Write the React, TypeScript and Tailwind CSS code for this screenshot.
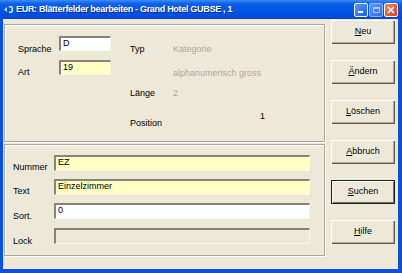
import React from "react";

const inputBase =
  "border-t-2 border-l-2 border-t-[#85837a] border-l-[#85837a] border-b border-r border-b-[#f7f6f1] border-r-[#f7f6f1] px-[2px] leading-[11px] text-black";

function Btn({ label, def }: { label: string; def?: boolean }) {
  const first = label.charAt(0);
  const rest = label.slice(1);
  return (
    <div
      className={
        "w-[64px] h-[24px] flex items-center justify-center bg-[#ece9d8] text-black " +
        (def
          ? "border border-[#1c1c1c] shadow-[inset_1px_1px_0_#ffffff,inset_-1px_-1px_0_#716f64]"
          : "shadow-[inset_1px_1px_0_#ffffff,inset_-1px_-1px_0_#5e5c53,inset_-2px_-2px_0_#aca899]")
      }
    >
      <span>
        <span className="underline underline-offset-[1px]">{first}</span>
        {rest}
      </span>
    </div>
  );
}

export default function App() {
  return (
    <div className="w-[402px] h-[273px] flex flex-col bg-[#0a4fdf] font-['Liberation_Sans',Arial,sans-serif] text-[9px] overflow-hidden">
      {/* title bar */}
      <div className="h-[19px] shrink-0 flex items-center pl-[3px] pr-[4px] bg-[linear-gradient(to_bottom,#3d8cf6_0%,#0b5fe9_20%,#0055e5_60%,#0047d6_100%)]">
        <svg width="11" height="9" viewBox="0 0 11 9" className="shrink-0">
          <path d="M1 4.5 L4 2 L4 7 Z" fill="#cfe3ff" />
          <path d="M6 2 C9 1 10 3 9 4.5 C10 6 9 8 6 7" stroke="#e8f2ff" strokeWidth="1.4" fill="none" />
        </svg>
        <span className="ml-[2px] text-white font-bold text-[9px] tracking-[-0.3px] leading-[11px] [text-shadow:1px_1px_0_#0a2a8a] whitespace-nowrap">
          EUR: Blätterfelder bearbeiten - Grand Hotel GUBSE , 1
        </span>
        <div className="ml-auto flex gap-[1px]">
          <div className="w-[14px] h-[14px] rounded-[2px] border border-white bg-[linear-gradient(135deg,#5b9cff,#1d5ee8)] flex items-end pl-[3px] pb-[3px]">
            <div className="w-[5px] h-[2px] bg-white" />
          </div>
          <div className="w-[14px] h-[14px] rounded-[2px] border border-[#b8cdf5] bg-[linear-gradient(135deg,#6fa6f8,#3d76e6)] flex items-center justify-center opacity-80">
            <div className="w-[7px] h-[6px] border border-[#d7e3fb] border-t-2" />
          </div>
          <div className="w-[14px] h-[14px] rounded-[2px] border border-white bg-[linear-gradient(135deg,#f08a5e,#d9401a)] flex items-center justify-center">
            <svg width="8" height="8" viewBox="0 0 8 8">
              <path d="M1 1 L7 7 M7 1 L1 7" stroke="white" strokeWidth="1.6" />
            </svg>
          </div>
        </div>
      </div>

      {/* body with frame */}
      <div className="flex-1 flex pl-[3px] pr-[4px] pb-[4px]">
        <div className="flex-1 flex bg-[#ece9d8]">
          {/* left column */}
          <div className="w-[322px] pl-[1px] pt-[5px] flex flex-col gap-[2px]">
            {/* top groupbox */}
            <div className="h-[118px] border border-[#aca899] shadow-[inset_1px_1px_0_#ffffff,1px_1px_0_#ffffff] flex">
              <div className="pl-[13px] pt-[11px] flex flex-col">
                <div className="flex">
                  <span className="w-[41px] pt-[8px] leading-[11px]">Sprache</span>
                  <div className={"w-[52px] h-[15px] bg-white " + inputBase}>D</div>
                </div>
                <div className="flex mt-[5px]">
                  <span className="w-[41px] pt-[7px] leading-[11px]">Art</span>
                  <div className={"w-[52px] h-[15px] bg-[#ffffc4] " + inputBase}>19</div>
                </div>
              </div>
              <div className="ml-[19px] pt-[19px] flex flex-col leading-[11px]">
                <div className="flex">
                  <span className="w-[43px]">Typ</span>
                  <span className="text-[#aca899]">Kategorie</span>
                </div>
                <div className="flex mt-[13px]">
                  <span className="w-[43px]" />
                  <span className="text-[#aca899]">alphanumerisch gross</span>
                </div>
                <div className="flex mt-[9px]">
                  <span className="w-[43px]">Länge</span>
                  <span className="text-[#aca899]">2</span>
                </div>
                <div className="flex mt-[12px] items-start">
                  <span className="w-[43px] mt-[7px]">Position</span>
                  <span className="ml-[87px]">1</span>
                </div>
              </div>
            </div>

            {/* bottom groupbox */}
            <div className="h-[112px] border border-[#aca899] shadow-[inset_1px_1px_0_#ffffff,1px_1px_0_#ffffff] pl-[8px] pt-[10px] flex flex-col gap-[6px]">
              <div className="flex">
                <span className="w-[41px] pt-[7px] leading-[11px]">Nummer</span>
                <div className={"w-[256px] h-[16px] bg-[#ffffc4] " + inputBase}>EZ</div>
              </div>
              <div className="flex">
                <span className="w-[41px] pt-[7px] leading-[11px]">Text</span>
                <div className={"w-[256px] h-[16px] bg-[#ffffc4] " + inputBase}>Einzelzimmer</div>
              </div>
              <div className="flex">
                <span className="w-[41px] pt-[8px] leading-[11px]">Sort.</span>
                <div className={"w-[256px] h-[16px] bg-white " + inputBase}>0</div>
              </div>
              <div className="flex">
                <span className="w-[41px] pt-[8px] leading-[11px]">Lock</span>
                <div className={"w-[256px] h-[16px] bg-[#ece9d8] " + inputBase}></div>
              </div>
            </div>
          </div>

          {/* right column buttons */}
          <div className="pl-[6px] pt-[1px] flex flex-col gap-[16px]">
            <Btn label="Neu" />
            <Btn label="Ändern" />
            <Btn label="Löschen" />
            <Btn label="Abbruch" />
            <Btn label="Suchen" def />
            <Btn label="Hilfe" />
          </div>
        </div>
      </div>
    </div>
  );
}
